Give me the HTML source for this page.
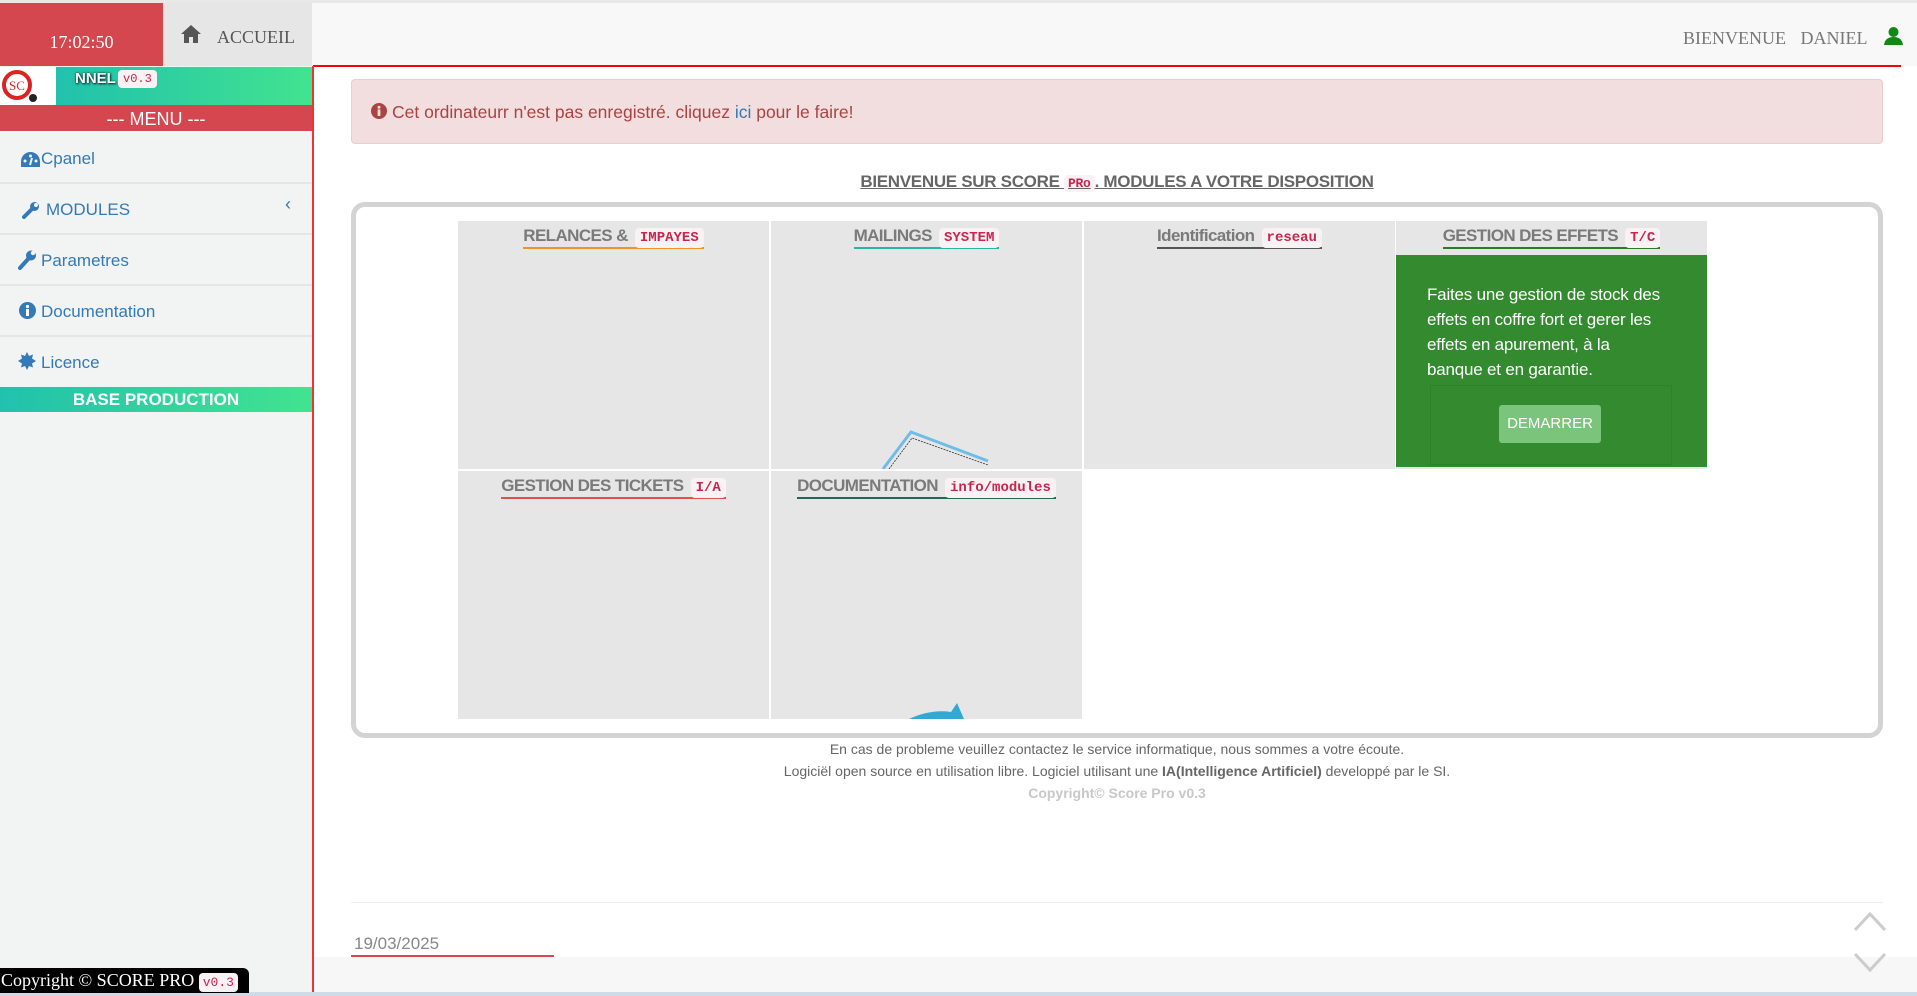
<!DOCTYPE html>
<html><head><meta charset="utf-8">
<style>
*{box-sizing:border-box;margin:0;padding:0}
body{width:1917px;height:996px;overflow:hidden;background:#fff;font-family:"Liberation Sans",sans-serif;position:relative}
.abs{position:absolute}
.serif{font-family:"Liberation Serif",serif}
code{font-family:"Liberation Mono",monospace;background:#f9f2f4;color:#c7254e;border-radius:4px;padding:2px 5px;font-weight:bold}
.tile{position:absolute;background:#e6e6e6}
.tt{position:absolute;left:0;right:0;top:5px;text-align:center;font-weight:bold;font-size:17px;color:#7a7a7a;letter-spacing:-0.6px}
.tt span{display:inline-block;padding-bottom:1px;border-bottom:2px solid}
.tt code{font-size:14px;margin-left:3px;letter-spacing:0}
.mi{position:absolute;left:0;width:312px;height:51px;border-bottom:2px solid #e4e6e6;color:#337ab7;font-size:17px}
.mi .t{position:absolute;left:41px;top:16px}
</style></head><body>
<div class="abs" style="left:0;top:0;width:1917px;height:3px;background:#e8e8e8"></div>
<div class="abs" style="left:312px;top:3px;width:1605px;height:63px;background:#f8f8f8"></div>
<div class="abs" style="left:313px;top:65px;width:1588px;height:2px;background:#f00"></div>
<div class="abs serif" style="left:0;top:3px;width:163px;height:63px;background:#d4474f;color:#fff;font-size:18px;text-align:center;padding-top:29px">17:02:50</div>
<div class="abs" style="left:163px;top:3px;width:149px;height:63px;background:#e6e6e6"></div>
<svg class="abs" style="left:180px;top:24px" width="22" height="20" viewBox="0 0 22 20"><path d="M11 1 L1 10 H4 V19 H9 V13 H13 V19 H18 V10 H21 Z" fill="#555"/></svg>
<div class="abs serif" style="left:217px;top:27px;font-size:18px;color:#555">ACCUEIL</div>
<div class="abs serif" style="left:1683px;top:28px;font-size:18px;color:#777;word-spacing:10px">BIENVENUE DANIEL</div>
<svg class="abs" style="left:1884px;top:26px" width="19" height="19" viewBox="0 0 19 19"><circle cx="9.5" cy="6" r="5" fill="#118811"/><path d="M0 19 Q1 11 9.5 11 Q18 11 19 19Z" fill="#118811"/></svg>

<div class="abs" style="left:0;top:66px;width:312px;height:930px;background:#f2f3f3"></div>
<div class="abs" style="left:312px;top:66px;width:2px;height:930px;background:#e33"></div>
<div class="abs" style="left:0;top:67px;width:56px;height:38px;background:#fff"></div>
<svg class="abs" style="left:2px;top:69px" width="36" height="34" viewBox="0 0 36 34"><circle cx="15" cy="16" r="13" fill="none" stroke="#d22" stroke-width="4"/><text x="7" y="21" font-family="Liberation Serif" font-size="13" fill="#d22">SC</text><circle cx="31" cy="29" r="4" fill="#222"/></svg>
<div class="abs" style="left:56px;top:67px;width:256px;height:38px;background:linear-gradient(90deg,#21c1ad,#42e38f)"></div>
<div class="abs" style="left:75px;top:70px;font-weight:bold;font-size:15px;color:#fff;text-shadow:0 0 2px #033,1px 1px 2px #033">NNEL</div>
<code class="abs" style="left:118px;top:70px;font-size:12px;font-weight:normal;padding:2px 5px">v0.3</code>
<div class="abs" style="left:0;top:105px;width:312px;height:26px;background:#d4474f;color:#fff;font-size:18px;text-align:center;line-height:28px">--- MENU ---</div>
<div class="mi" style="top:133px"><svg class="abs" style="left:21px;top:19px" width="19" height="15" viewBox="0 0 19 15"><path d="M9.5 0A9.5 9.5 0 0 0 0 9.5V15H19V9.5A9.5 9.5 0 0 0 9.5 0Z" fill="#337ab7"/><circle cx="4" cy="9" r="1.5" fill="#f2f3f3"/><circle cx="9.5" cy="4" r="1.5" fill="#f2f3f3"/><circle cx="15" cy="9" r="1.5" fill="#f2f3f3"/><path d="M9 13L11 6" stroke="#f2f3f3" stroke-width="2"/></svg><span class="t">Cpanel</span></div>
<div class="mi" style="top:184px"><svg class="abs" style="left:22px;top:17px" width="18" height="18" viewBox="0 0 18 18"><path d="M2 16 L10 8" stroke="#337ab7" stroke-width="4" stroke-linecap="round"/><circle cx="12.5" cy="5.5" r="4.5" fill="#337ab7"/><circle cx="14" cy="4" r="2" fill="#f2f3f3"/></svg><span class="t" style="left:46px">MODULES</span><span class="abs" style="left:285px;top:10px;font-size:18px">&#8249;</span></div>
<div class="mi" style="top:235px"><svg class="abs" style="left:18px;top:15px" width="18" height="20" viewBox="0 0 18 20"><path d="M2 18 L11 8" stroke="#337ab7" stroke-width="4" stroke-linecap="round"/><circle cx="13" cy="5.5" r="5" fill="#337ab7"/><circle cx="15" cy="3" r="2.2" fill="#f2f3f3"/></svg><span class="t">Parametres</span></div>
<div class="mi" style="top:286px"><svg class="abs" style="left:19px;top:16px" width="17" height="17" viewBox="0 0 17 17"><circle cx="8.5" cy="8.5" r="8.5" fill="#337ab7"/><circle cx="8.5" cy="4.5" r="1.6" fill="#fff"/><rect x="7" y="7" width="3" height="7" fill="#fff"/></svg><span class="t">Documentation</span></div>
<div class="mi" style="top:337px;border:none"><svg class="abs" style="left:18px;top:15px" width="18" height="18" viewBox="0 0 18 18"><path d="M9 0L11 4L15 2.5L14 6.5L18 9L14 11.5L15 15.5L11 14L9 18L7 14L3 15.5L4 11.5L0 9L4 6.5L3 2.5L7 4Z" fill="#337ab7"/></svg><span class="t">Licence</span></div>
<div class="abs" style="left:0;top:387px;width:312px;height:25px;background:linear-gradient(90deg,#21c1ad,#42e38f);color:#fff;font-weight:bold;font-size:17px;text-align:center;line-height:26px">BASE PRODUCTION</div>

<div class="abs" style="left:351px;top:79px;width:1532px;height:65px;background:#f2dede;border:1px solid #ebccd1;border-radius:4px"></div>
<svg class="abs" style="left:371px;top:103px" width="16" height="16" viewBox="0 0 16 16"><circle cx="8" cy="8" r="8" fill="#a94442"/><circle cx="8" cy="4.3" r="1.5" fill="#f2dede"/><rect x="6.6" y="6.5" width="2.8" height="6.5" fill="#f2dede"/></svg>
<div class="abs" style="left:392px;top:102px;font-size:17.5px;color:#a94442">Cet ordinateurr n'est pas enregistré. cliquez <span style="color:#337ab7">ici</span> pour le faire!</div>

<div class="abs" style="left:351px;width:1532px;top:172px;text-align:center;font-weight:bold;font-size:17px;color:#666;text-decoration:underline;letter-spacing:-0.3px">BIENVENUE SUR SCORE <code style="font-size:13px;padding:1px 4px">PRo</code>. MODULES A VOTRE DISPOSITION</div>

<div class="abs" style="left:351px;top:202px;width:1532px;height:536px;border:5px solid #d3d3d3;border-radius:14px"></div>
<div class="tile" style="left:458px;top:221px;width:311px;height:248px"><div class="tt"><span style="border-color:#f0922b">RELANCES &amp; <code>IMPAYES</code></span></div></div>
<div class="tile" style="left:771px;top:221px;width:311px;height:248px"><div class="tt"><span style="border-color:#2ab3a6">MAILINGS <code>SYSTEM</code></span></div>
<svg class="abs" style="left:0;top:0" width="311" height="248"><path d="M112 248 L140 211 L217 240" fill="none" stroke="#6dbde8" stroke-width="3"/><path d="M118 248 L141 217 L217 244" fill="none" stroke="#333" stroke-width="0.8" stroke-dasharray="2 1"/></svg></div>
<div class="tile" style="left:1084px;top:221px;width:311px;height:248px"><div class="tt"><span style="border-color:#555">Identification <code>reseau</code></span></div></div>
<div class="tile" style="left:1396px;top:221px;width:311px;height:248px"><div class="tt"><span style="border-color:#2b7a2b">GESTION DES EFFETS <code>T/C</code></span></div>
<div class="abs" style="left:0;top:34px;width:311px;height:212px;background:#338a2f"></div>
<div class="abs" style="left:34px;top:164px;width:242px;height:80px;border:1px solid #2f8229"></div>
<div class="abs" style="left:31px;top:61px;width:238px;color:#fff;font-size:17px;line-height:25px;letter-spacing:-0.2px">Faites une gestion de stock des effets en coffre fort et gerer les effets en apurement, à la banque et en garantie.</div>
<div class="abs" style="left:103px;top:184px;width:102px;height:38px;background:#7bc47b;border-radius:3px;color:#fff;font-size:15px;text-align:center;line-height:38px">DEMARRER</div></div>
<div class="tile" style="left:458px;top:471px;width:311px;height:248px"><div class="tt"><span style="border-color:#d9534f">GESTION DES TICKETS <code>I/A</code></span></div></div>
<div class="tile" style="left:771px;top:471px;width:311px;height:248px;overflow:hidden"><div class="tt"><span style="border-color:#1e6a55">DOCUMENTATION <code>info/modules</code></span></div>
<svg class="abs" style="left:0;top:0" width="311" height="248"><path d="M138 248 Q160 238 180 241 L186 232 L193 248Z" fill="#2eaad4"/></svg></div>

<div class="abs" style="left:351px;width:1532px;top:738px;text-align:center;font-size:14px;color:#666;line-height:22px">En cas de probleme veuillez contactez le service informatique, nous sommes a votre écoute.<br>Logiciël open source en utilisation libre. Logiciel utilisant une <b>IA(Intelligence Artificiel)</b> developpé par le SI.<br><b style="color:#c8c8c8">Copyright© Score Pro v0.3</b></div>
<div class="abs" style="left:351px;top:902px;width:1532px;height:1px;background:#eee"></div>
<div class="abs" style="left:314px;top:957px;width:1603px;height:35px;background:#f7f7f7"></div>
<div class="abs" style="left:354px;top:934px;font-size:17px;color:#888">19/03/2025</div>
<div class="abs" style="left:351px;top:955px;width:203px;height:2px;background:#e0454f"></div>
<div class="abs" style="left:0;top:992px;width:1917px;height:4px;background:#cfdbe6"></div>
<svg class="abs" style="left:1852px;top:908px" width="36" height="68" viewBox="0 0 36 68"><path d="M3 22 L18 6 L33 22" fill="none" stroke="#ccc" stroke-width="3"/><path d="M3 46 L18 62 L33 46" fill="none" stroke="#ccc" stroke-width="3"/></svg>
<div class="abs serif" style="left:0;top:968px;width:249px;height:25px;background:#000;color:#fff;font-size:18px;padding-left:1px;line-height:25px;border-radius:0 6px 0 0">Copyright © SCORE PRO <code style="font-size:13px;font-weight:normal;padding:2px 4px">v0.3</code></div>
</body></html>
